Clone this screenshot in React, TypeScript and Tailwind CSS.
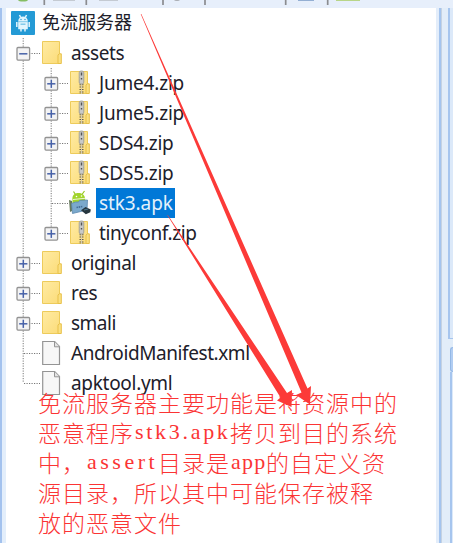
import React from "react";

type Toggle = "plus" | "minus" | "none";
type Kind = "folder" | "zip" | "apk" | "file";

interface Entry {
  label: string;
  level: 1 | 2;
  kind: Kind;
  toggle: Toggle;
  tracking: string;
  selected?: boolean;
  last?: boolean;
}

const entries: Entry[] = [
  { label: "assets", level: 1, kind: "folder", toggle: "minus", tracking: "tracking-[-0.4px]" },
  { label: "Jume4.zip", level: 2, kind: "zip", toggle: "plus", tracking: "tracking-[-0.2px]" },
  { label: "Jume5.zip", level: 2, kind: "zip", toggle: "plus", tracking: "tracking-[-0.2px]" },
  { label: "SDS4.zip", level: 2, kind: "zip", toggle: "plus", tracking: "tracking-[-0.2px]" },
  { label: "SDS5.zip", level: 2, kind: "zip", toggle: "plus", tracking: "tracking-[-0.2px]" },
  { label: "stk3.apk", level: 2, kind: "apk", toggle: "none", tracking: "tracking-[-0.1px]", selected: true },
  { label: "tinyconf.zip", level: 2, kind: "zip", toggle: "plus", tracking: "tracking-[-0.4px]", last: true },
  { label: "original", level: 1, kind: "folder", toggle: "plus", tracking: "tracking-[-0.4px]" },
  { label: "res", level: 1, kind: "folder", toggle: "plus", tracking: "tracking-[-0.3px]" },
  { label: "smali", level: 1, kind: "folder", toggle: "plus", tracking: "tracking-[-0.5px]" },
  { label: "AndroidManifest.xml", level: 1, kind: "file", toggle: "none", tracking: "tracking-[-0.42px]" },
  { label: "apktool.yml", level: 1, kind: "file", toggle: "none", tracking: "tracking-[-0.3px]", last: true },
];

function Branch({ toggle, last, through }: { toggle: Toggle; last?: boolean; through?: boolean }) {
  return (
    <svg className="h-[30px] w-7 shrink-0 overflow-visible" viewBox="0 0 28 30" fill="none">
      <path d={last ? "M14.2 0V15" : "M14.2 0V30"} stroke="#777" strokeDasharray="1.2 1.3" />
      {!through && <path d="M15 15.500H31" stroke="#777" strokeDasharray="1.2 1.3" />}
      {!through && toggle !== "none" && (
        <>
          <rect x="8" y="9.500" width="12.600" height="12.600" rx="1" fill="#f3f3f4" stroke="#929292" strokeWidth="1.3" />
          <path d="M10.200 15.800h8.200" stroke="#4661a8" strokeWidth="1.5" />
          {toggle === "plus" && <path d="M14.300 11.700v8.200" stroke="#4661a8" strokeWidth="1.5" />}
        </>
      )}
    </svg>
  );
}

function FolderShape() {
  return (
    <>
      <path d="M.5 1.500h17v22H.5z" fill="url(#folder)" stroke="#edcb5b" />
      <path d="M16 23.500V15l1.200-1.200h2.100v9.700z" fill="#fbe082" stroke="#e8c14b" />
    </>
  );
}

function EntryIcon({ kind }: { kind: Kind }) {
  return (
    <svg className="h-[26px] w-5 shrink-0 overflow-visible" viewBox="0 0 20 26" fill="none">
      {kind === "folder" && <FolderShape />}
      {kind === "zip" && (
        <>
          <FolderShape />
          <path d="M11.500 7v17" stroke="#5e5a4c" strokeWidth="4" strokeDasharray="1 1.400" />
          <path d="M11.500 7v17" stroke="#d9ceb0" strokeWidth="1" />
          <rect x="9.200" y="1" width="4.600" height="13" rx="1.800" fill="#c8c9c8" stroke="#999990" strokeWidth=".8" />
          <path d="M11.500 2.500v3M11.500 8v1.500" stroke="#555" strokeWidth="1.4" />
        </>
      )}
      {kind === "file" && (
        <>
          <path d="M.7 1.500h12l4.800 5v18H.7z" fill="#f7f7f7" stroke="#949494" strokeWidth="1.2" />
          <path d="M12.500 1.800v5h5" fill="#e4e4e4" stroke="#949494" />
        </>
      )}
      {kind === "apk" && (
        <>
          <path d="M2.500 10.500C1.800 5 4.500 3 8.500 3s6.800 2.200 6.800 7.500v3.500h-13z" fill="#a2d52b" />
          <path d="M3.500 1.500l2 3M14.500 1l-2.200 3" stroke="#95c620" strokeWidth="1.2" />
          <path d="M3 9.500l12-1.200" stroke="#eef7d3" />
          <circle cx="6.500" cy="6.500" r=".8" fill="#fff" />
          <circle cx="11.500" cy="6" r=".8" fill="#fff" />
          <path d="M-1 10l3 1v10l-2 1z" fill="#66795b" />
          <path d="M1.500 13.500l4-1.500h3l1-1.500 8-.5-.5 10-14.500 3.500z" fill="#7ba9cc" stroke="#5c88ad" strokeWidth=".8" />
          <path d="M6.500 17.500l6-1" stroke="#456f97" strokeWidth="1.6" strokeDasharray="1.500 .7" />
          <path d="M11 20.300l4.500-3.200 5.300 2.500-.5 2.600-4.500 2z" fill="#26363f" />
          <path d="M14 20l4-1" stroke="#4b7890" />
        </>
      )}
    </svg>
  );
}

function TreeRow({ entry }: { entry: Entry }) {
  return (
    <div className="flex h-[30px] items-center">
      {entry.level === 2 && <Branch toggle="none" through />}
      <Branch toggle={entry.toggle} last={entry.last} />
      <div className="ml-[5px] flex">
        <EntryIcon kind={entry.kind} />
      </div>
      <span
        className={`ml-[6px] flex h-[30px] items-center whitespace-nowrap pl-[3px] text-[19px] leading-[30px] ${entry.tracking} ${
          entry.selected ? "w-[79px] bg-[#0078d7] text-[#e3f1fb]" : "text-[#20202a]"
        }`}
      >
        {entry.label}
      </span>
    </div>
  );
}

function Toolbar() {
  return (
    <svg className="block h-2 w-full bg-[#e7effb]" viewBox="0 0 453 8">
      <path d="M44.300 0v5M86.300 0v5M163 0v5M205 0v5M285.700 0v5M327.700 0v5" stroke="#8b8c90" strokeWidth="1.7" />
      <ellipse cx="23" cy="-.5" rx="5" ry="2" fill="#85bd62" />
      <path d="M53 .2h22M99 .2h19" stroke="#b9bec5" strokeWidth="1.2" />
      <ellipse cx="177" cy="-.5" rx="3" ry="1.600" fill="#a8acb2" />
      <path d="M298 .2h16" stroke="#8ba8ce" strokeWidth="1.4" />
      <path d="M336 .2h24" stroke="#b3d27b" strokeWidth="1.4" />
    </svg>
  );
}

function RightFrame() {
  return (
    <div className="flex w-[17px] shrink-0 bg-[#e2edf9]">
      <div className="w-[3px] bg-[#e3edfa]" />
      <div className="w-[2px] bg-[#a4c4ee]" />
      <div className="w-px bg-[#c5d2e2]" />
      <div className="flex flex-1 flex-col items-end">
        <div className="h-[331px] w-[5px] border-b border-l-2 border-[#a6c5ee] bg-[#dce9f9]" />
        <div className="mt-2 h-[25px] w-[3px] rounded-l-sm border-y border-l border-[#94b8e6] bg-[#b1cdf2]" />
        <div className="w-[3px] flex-1 border-l-2 border-[#a6c5ee] bg-[#dce9f9]" />
      </div>
    </div>
  );
}

interface Run {
  text: string;
  latin?: string;
}

/* Latin runs are tracked out to half-width cells of 12px per character. */
const note: Run[][] = [
  [{ text: "免流服务器主要功能是将资源中的" }],
  [
    { text: "恶意程序" },
    { text: "stk3.apk", latin: "w-[96px] pl-px tracking-[2.7px]" },
    { text: "拷贝到目的系统" },
  ],
  [
    { text: "中，" },
    { text: "assert", latin: "w-[72px] pl-px tracking-[3.5px]" },
    { text: "目录是" },
    { text: "app", latin: "w-[36px] pl-px tracking-[1.2px]" },
    { text: "的自定义资" },
  ],
  [{ text: "源目录，所以其中可能保存被释" }],
  [{ text: "放的恶意文件" }],
];

function NoteLine({ runs }: { runs: Run[] }) {
  return (
    <div className="flex h-[30px] items-center whitespace-pre leading-[30px]">
      {runs.map((run) =>
        run.latin ? (
          <span key={run.text} className={`font-['Liberation_Serif',serif] text-[22px] ${run.latin}`}>
            {run.text}
          </span>
        ) : (
          <span key={run.text} className="font-['Noto_Sans_CJK_SC',sans-serif] text-[23px] font-light tracking-[1px]">
            {run.text}
          </span>
        ),
      )}
    </div>
  );
}

export default function App() {
  return (
    <div className="relative flex h-[543px] w-[453px] flex-col overflow-hidden bg-white">
      <svg className="absolute h-0 w-0">
        <defs>
          <linearGradient id="folder" x1="0" y1="0" x2="1" y2="1">
            <stop offset="0" stopColor="#ffeba3" />
            <stop offset="1" stopColor="#fbdc79" />
          </linearGradient>
        </defs>
      </svg>
      <Toolbar />
      <div className="flex min-h-0 flex-1">
        <div className="w-[6px] shrink-0 border-l-2 border-[#a3c2ee] bg-[#e3eefb]" />
        <div className="flex-1 pl-[3px] font-['Noto_Sans','Noto_Sans_CJK_SC',sans-serif]">
          <div className="flex h-[30px] items-center">
            <svg className="ml-[2px] h-6 w-6" viewBox="0 0 24 24">
              <rect width="24" height="24" rx="1" fill="#249ad5" />
              <path d="M7.200 10.200a4.800 4.800 0 0 1 9.600 0v8H7.200z" fill="#e2f5fd" />
              <path d="M8.500 4l1.200 2.500M15.500 4l-1.200 2.500M5.800 11v5M18.200 11v5M10 18v2.500M14 18v2.500" stroke="#e2f5fd" strokeWidth="1.5" />
              <path d="M7 10.700h10" stroke="#65bde3" strokeWidth=".8" />
              <path d="M9.500 13.200h5" stroke="#7ac7e8" strokeWidth="1.4" />
              <circle cx="10" cy="8.500" r=".7" fill="#249ad5" />
              <circle cx="14" cy="8.500" r=".7" fill="#249ad5" />
            </svg>
            <span className="mb-[3px] ml-[7px] font-['Noto_Sans_CJK_SC',sans-serif] text-[18px] leading-[27px] text-[#20202a]">
              免流服务器
            </span>
          </div>
          {entries.map((entry) => (
            <TreeRow key={entry.label} entry={entry} />
          ))}
        </div>
        <RightFrame />
      </div>
      <div className="absolute left-[38px] top-[387px] text-[#fb3434]">
        {note.map((runs) => (
          <NoteLine key={runs[0].text} runs={runs} />
        ))}
      </div>
      <svg className="absolute left-0 top-0 h-[543px] w-[453px]" viewBox="0 0 453 543" fill="#fc3a38">
        <path d="M140.700 14L301.500 392.500 296 395 310 404.500 311 386 307.500 388.500 141.300 14Z" />
        <path d="M167.200 215L280.500 397.500 277 400.500 291.500 407 292 390 287 393 167.800 215Z" />
      </svg>
    </div>
  );
}
